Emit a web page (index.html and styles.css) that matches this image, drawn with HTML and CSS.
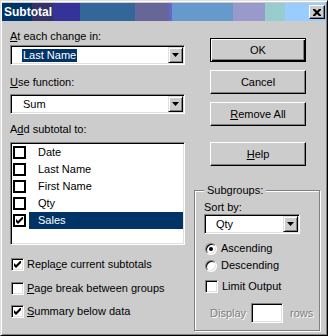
FILE: index.html
```html
<!DOCTYPE html>
<html lang="en">
<head>
  <meta charset="UTF-8" />
  <title>Subtotal</title>
  <link rel="stylesheet" href="styles.css">
</head>
<body>
  <div class="dialog">
    <div class="titlebar">
      <span class="title">Subtotal</span>
      <span class="close">
        <svg width="8" height="7" viewBox="0 0 8 7"><path d="M0 0h2l2 2 2-2h2v1l-2.5 2.5 2.5 2.5v1h-2l-2-2-2 2h-2v-1l2.5-2.5-2.5-2.5z" fill="#000"/></svg>
      </span>
    </div>

    <div class="main">
      <div class="left">
        <div class="label first"><u>A</u>t each change in:</div>
        <div class="combo wide">
          <div class="combo-text"><span class="sel">Last Name</span></div>
          <div class="drop"><svg width="7" height="4" viewBox="0 0 7 4"><polygon points="0,0 7,0 3.5,4" fill="#000"/></svg></div>
        </div>

        <div class="label gap-l2"><u>U</u>se function:</div>
        <div class="combo wide c2">
          <div class="combo-text"><span class="plain">Sum</span></div>
          <div class="drop"><svg width="7" height="4" viewBox="0 0 7 4"><polygon points="0,0 7,0 3.5,4" fill="#000"/></svg></div>
        </div>

        <div class="label gap-l3">A<u>d</u>d subtotal to:</div>
        <div class="list">
          <div class="item"><span class="lbox"></span><span class="itext">Date</span></div>
          <div class="item"><span class="lbox"></span><span class="itext">Last Name</span></div>
          <div class="item"><span class="lbox"></span><span class="itext">First Name</span></div>
          <div class="item"><span class="lbox"></span><span class="itext">Qty</span></div>
          <div class="item"><span class="lbox"><svg width="7" height="7" viewBox="0 0 7 7"><polygon points="0,2 2,4 6,0 7,0 7,2 2,7 0,5" fill="#000"/></svg></span><span class="itext active">Sales</span></div>
        </div>

        <div class="check c-first"><span class="cbox"><svg width="7" height="7" viewBox="0 0 7 7"><polygon points="0,2 2,4 6,0 7,0 7,2 2,7 0,5" fill="#000"/></svg></span>Repla<u>c</u>e current subtotals</div>
        <div class="check c-mid"><span class="cbox"></span><u>P</u>age break between groups</div>
        <div class="check c-last"><span class="cbox"><svg width="7" height="7" viewBox="0 0 7 7"><polygon points="0,2 2,4 6,0 7,0 7,2 2,7 0,5" fill="#000"/></svg></span><u>S</u>ummary below data</div>
      </div>

      <div class="right">
        <div class="btn default">OK</div>
        <div class="btn">Cancel</div>
        <div class="btn"><u>R</u>emove All</div>
        <div class="btn help"><u>H</u>elp</div>

        <fieldset class="group">
          <legend>Subgroups:</legend>
          <div class="label sort">Sort by:</div>
          <div class="combo small">
            <div class="combo-text"><span class="plain">Qty</span></div>
            <div class="drop"><svg width="7" height="4" viewBox="0 0 7 4"><polygon points="0,0 7,0 3.5,4" fill="#000"/></svg></div>
          </div>
          <div class="opt r-first"><span class="radio on"></span>Ascending</div>
          <div class="opt r-second"><span class="radio"></span>Descending</div>
          <div class="opt limit"><span class="cbox"></span>Limit Output</div>
          <div class="display-row">
            <span class="disabled">Display</span>
            <span class="field"></span>
            <span class="disabled rows">rows</span>
          </div>
        </fieldset>
      </div>
    </div>
  </div>
</body>
</html>
```

FILE: styles.css
```css
body {
  margin: 0;
  background: #cccccc;
  font-family: "Liberation Sans", Arial, sans-serif;
  font-size: 11px;
  line-height: 13px;
  color: #000;
}
u {
  text-decoration-thickness: 1px;
  text-underline-offset: 1px;
}
.dialog {
  width: 328px;
  height: 336px;
  box-sizing: border-box;
  border: 1px solid;
  border-color: #dfdfdf #000 #000 #dfdfdf;
  box-shadow: inset 1px 1px #fff, inset -1px -1px #808080;
  padding: 2px 1px 1px 1px;
  background: #cccccc;
}
.titlebar {
  height: 18px;
  display: flex;
  align-items: center;
  justify-content: space-between;
  padding: 0 1px 0 2px;
  background: linear-gradient(to right,
    #003366 0 30px, #333366 30px 51px, #333399 51px 78px,
    #336699 78px 133px, #666699 133px 167px, #6666cc 167px 170px,
    #6699cc 170px 231px, #9999cc 231px 263px, #99cccc 263px 283px,
    #99ccff 283px);
}
.title {
  color: #fff;
  font-weight: bold;
  font-size: 12px;
}
.close {
  width: 16px;
  height: 14px;
  box-sizing: border-box;
  display: flex;
  align-items: center;
  justify-content: center;
  background: #cccccc;
  border: 1px solid;
  border-color: #fff #000 #000 #fff;
  box-shadow: inset -1px -1px #808080;
}

.main {
  display: grid;
  grid-template-columns: 175px 126px;
  column-gap: 9px;
  padding: 9px 0 0 8px;
}

/* left column */
.label.gap-l2 { margin-top: 11px; }
.label.gap-l3 { margin-top: 9px; }
.combo {
  height: 20px;
  box-sizing: border-box;
  display: flex;
  padding: 1px;
  border: 1px solid;
  border-color: #808080 #fff #fff #808080;
  box-shadow: inset 1px 1px #000, inset -1px -1px #dfdfdf;
  background: #fff;
}
.combo.wide { margin-top: 2px; }
.combo.wide.c2 { margin-top: 5px; }
.combo-text {
  flex: 1;
  display: flex;
  align-items: center;
  padding-left: 10px;
}
.sel {
  background: #003366;
  color: #fff;
  padding: 0 1px;
}
.plain { padding: 0 1px; }
.drop {
  width: 15px;
  height: 16px;
  box-sizing: border-box;
  display: flex;
  align-items: center;
  justify-content: center;
  background: #cccccc;
  border: 1px solid;
  border-color: #dfdfdf #000 #000 #dfdfdf;
  box-shadow: inset 1px 1px #fff, inset -1px -1px #808080;
}

.list {
  margin-top: 6px;
  height: 103px;
  box-sizing: border-box;
  padding: 1px;
  border: 1px solid;
  border-color: #808080 #fff #fff #808080;
  box-shadow: inset 1px 1px #000, inset -1px -1px #dfdfdf;
  background: #fff;
}
.item {
  height: 17px;
  display: flex;
  align-items: center;
}
.lbox {
  width: 13px;
  height: 13px;
  box-sizing: border-box;
  margin: 0 3px 0 1px;
  border: 2px solid #000;
  background: #fff;
  display: flex;
  align-items: center;
  justify-content: center;
}
.itext {
  flex: 1;
  height: 17px;
  line-height: 17px;
  padding-left: 9px;
}
.itext.active {
  background: #003366;
  color: #fff;
}

.check, .opt {
  height: 13px;
  display: flex;
  align-items: center;
}
.check.c-first { margin-top: 13px; }
.check.c-mid { margin-top: 11px; }
.check.c-last { margin-top: 10px; }
.cbox {
  width: 13px;
  height: 13px;
  box-sizing: border-box;
  margin: 0 3px 0 1px;
  border: 1px solid;
  border-color: #808080 #fff #fff #808080;
  box-shadow: inset 1px 1px #000, inset -1px -1px #dfdfdf;
  background: #fff;
  display: flex;
  align-items: center;
  justify-content: center;
}

/* right column */
.right { padding-top: 8px; }
.btn {
  width: 96px;
  height: 24px;
  box-sizing: border-box;
  margin: 0 0 8px 16px;
  display: flex;
  align-items: center;
  justify-content: center;
  border: 1px solid;
  border-color: #fff #000 #000 #fff;
  box-shadow: inset -1px -1px #808080;
}
.btn.default {
  border-color: #000;
  box-shadow: inset 1px 1px #fff, inset -1px -1px #000, inset -2px -2px #808080;
}
.btn.help { margin-top: 16px; margin-bottom: 0; }

.group {
  margin: 18px 0 0;
  width: 126px;
  min-width: 0;
  box-sizing: border-box;
  padding: 0 0 7px 9px;
  border: 1px solid #808080;
  box-shadow: inset 1px 1px #fff, 1px 1px #fff;
}
.group legend {
  padding: 0 3px;
  background: #cccccc;
}
.label.sort { margin-top: 4px; }
.combo.small { width: 96px; }
.combo.small .combo-text { padding-left: 9px; }
.opt.r-first { margin-top: 8px; }
.opt.r-second { margin-top: 4px; }
.opt.limit { margin-top: 8px; }
.radio {
  width: 12px;
  height: 12px;
  box-sizing: border-box;
  margin: 0 4px 0 1px;
  border-radius: 50%;
  border: 1px solid;
  border-color: #808080 #fff #fff #808080;
  box-shadow: inset 1px 1px #000, inset -1px -1px #dfdfdf;
  background: #fff;
  display: flex;
  align-items: center;
  justify-content: center;
}
.radio.on::after {
  content: "";
  width: 4px;
  height: 4px;
  border-radius: 50%;
  background: #000;
}
.opt .cbox { margin-right: 4px; }
.display-row {
  margin-top: 10px;
  display: flex;
  align-items: center;
}
.disabled {
  color: #808080;
  text-shadow: 1px 1px #fff;
  margin-left: 6px;
}
.field {
  width: 32px;
  height: 20px;
  box-sizing: border-box;
  margin-left: 5px;
  border: 1px solid;
  border-color: #808080 #fff #fff #808080;
  box-shadow: inset 1px 1px #000, inset -1px -1px #dfdfdf;
  background: #fff;
}
.disabled.rows { margin-left: 7px; }
```
